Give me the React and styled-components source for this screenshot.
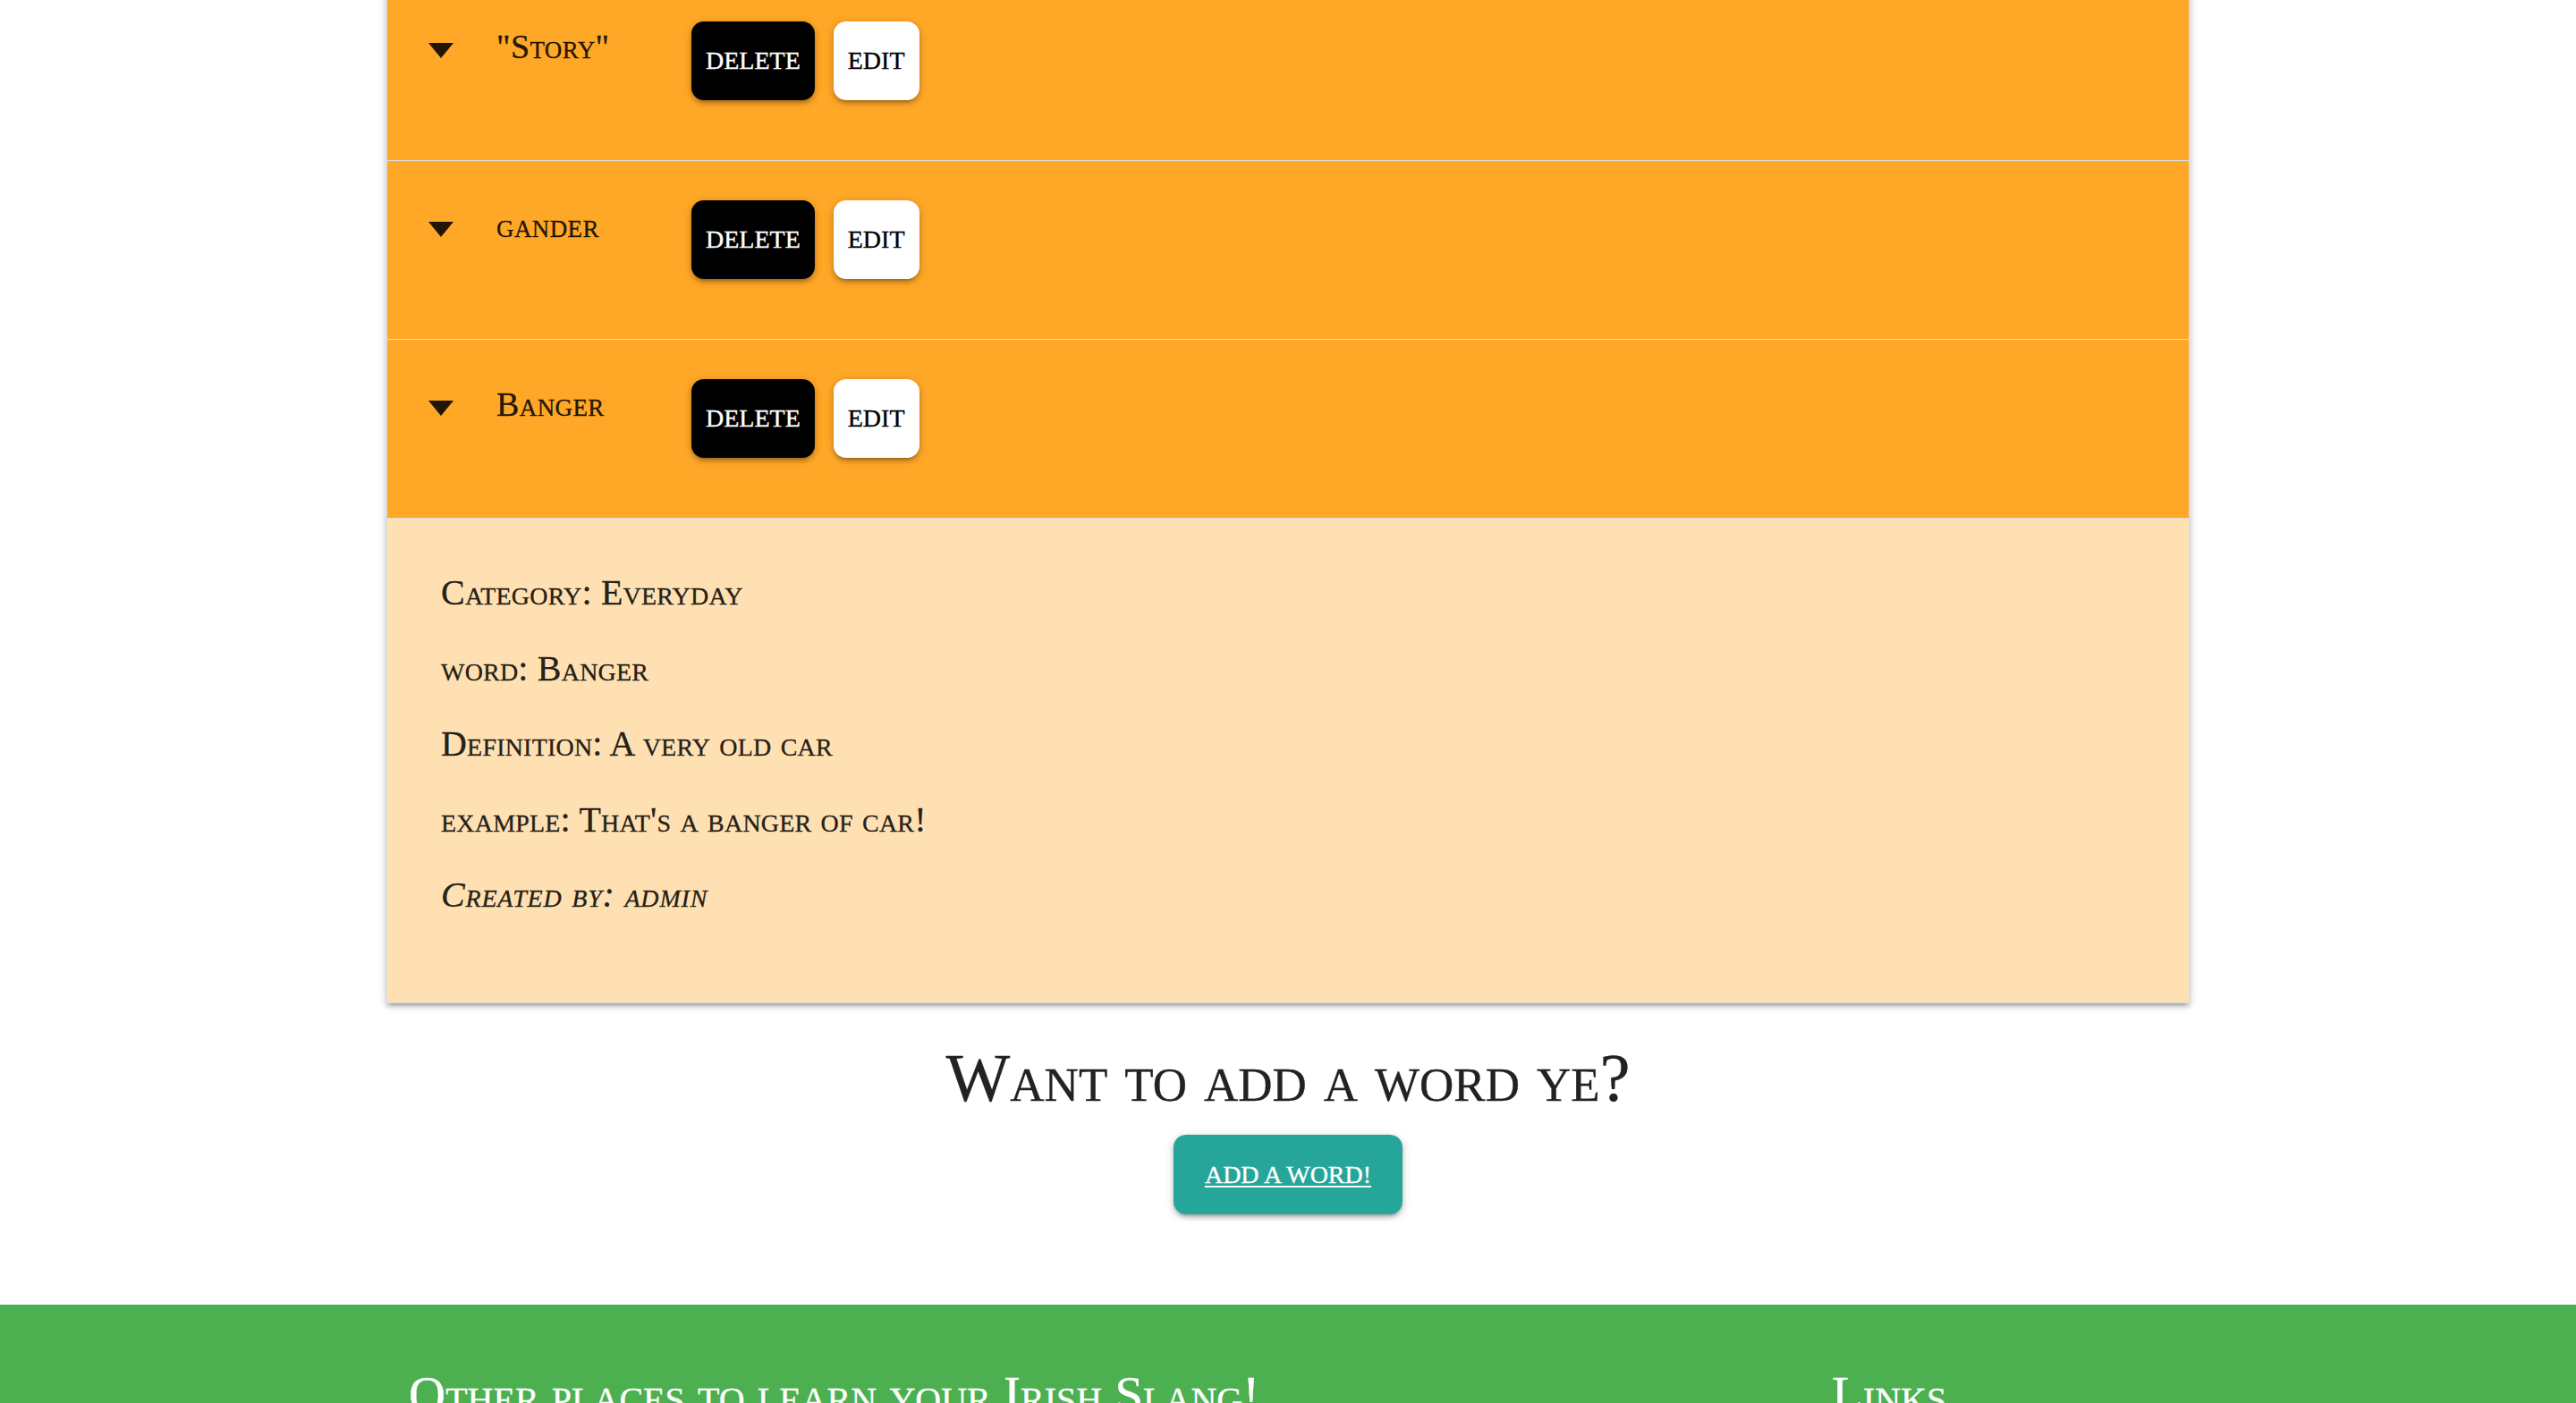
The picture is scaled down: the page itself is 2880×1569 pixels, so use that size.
import React from "react";
import styled, { createGlobalStyle } from "styled-components";

const GlobalStyle = createGlobalStyle`
  html, body {
    margin: 0;
    padding: 0;
    background: #ffffff;
  }
  body {
    font-family: "Liberation Serif", "Times New Roman", serif;
    color: rgba(0, 0, 0, 0.87);
    font-variant: small-caps;
    overflow: hidden;
    -webkit-text-stroke: 0.35px currentColor;
  }
`;

const Page = styled.div`
  display: flex;
  flex-direction: column;
`;

const Container = styled.main`
  width: 70%;
  margin: -21px auto 0;
`;

const Collapsible = styled.ul`
  list-style: none;
  margin: 0;
  padding: 0;
  border-top: 1px solid #dddddd;
  border-left: 1px solid #dddddd;
  border-right: 1px solid #dddddd;
  box-shadow: 0 4px 4px 0 rgba(0, 0, 0, 0.14), 0 6px 2px -4px rgba(0, 0, 0, 0.12),
    0 2px 10px 0 rgba(0, 0, 0, 0.2);
`;

const Item = styled.li``;

const Header = styled.div`
  display: flex;
  align-items: flex-start;
  box-sizing: border-box;
  height: 200px;
  padding: 44px 0 0 46px;
  background: #ffa726;
  border-bottom: 1px solid #dddddd;
`;

const Arrow = styled.svg`
  flex: none;
  width: 28px;
  height: 17px;
  margin-top: 24px;
  margin-right: 48px;
`;

const Word = styled.span`
  flex: none;
  width: 218px;
  margin-top: 9px;
  font-size: 38px;
  line-height: 1;
  letter-spacing: 0.4px;
`;

const Btn = styled.button`
  flex: none;
  height: 88px;
  padding: 0 16px;
  margin-right: 21px;
  border: none;
  border-radius: 14px;
  font-family: "Liberation Serif", "Times New Roman", serif;
  font-size: 28px;
  font-variant: normal;
  text-transform: uppercase;
  line-height: 88px;
  cursor: pointer;
  -webkit-text-stroke: 0.35px currentColor;
  background: ${(p) => (p.$variant === "danger" ? "#000000" : "#ffffff")};
  color: ${(p) => (p.$variant === "danger" ? "#ffffff" : "#000000")};
  box-shadow: 0 4px 4px 0 rgba(0, 0, 0, 0.14), 0 6px 2px -4px rgba(0, 0, 0, 0.12),
    0 2px 10px 0 rgba(0, 0, 0, 0.2);
`;

const Body = styled.div`
  display: flex;
  flex-direction: column;
  gap: 24.5px;
  padding: 53px 60px 90px;
  background: #ffe0b2;
  border-bottom: 1px solid #dddddd;
`;

const Detail = styled.p`
  margin: 0;
  font-size: 40px;
  line-height: 60px;
  letter-spacing: ${(p) => (p.$italic ? "0.8px" : "0.2px")};
  font-style: ${(p) => (p.$italic ? "italic" : "normal")};
`;

const Cta = styled.section`
  display: flex;
  flex-direction: column;
  align-items: center;
  padding: 38px 0 101px;
`;

const CtaTitle = styled.h4`
  margin: 0 0 18px;
  font-size: 76px;
  line-height: 1.2;
  font-weight: 400;
  color: #222222;
`;

const AddButton = styled.a`
  display: inline-block;
  height: 89px;
  padding: 0 35px;
  border-radius: 14px;
  background: #26a69a;
  color: #ffffff;
  font-size: 28px;
  font-variant: normal;
  text-transform: uppercase;
  line-height: 89px;
  text-decoration: underline;
  text-underline-offset: 3px;
  box-shadow: 0 4px 4px 0 rgba(0, 0, 0, 0.14), 0 6px 2px -4px rgba(0, 0, 0, 0.12),
    0 2px 10px 0 rgba(0, 0, 0, 0.2);
`;

const Footer = styled.footer`
  background: #4caf50;
  padding-top: 70px;
  min-height: 400px;
`;

const FooterInner = styled.div`
  width: 70%;
  margin: 0 auto;
  box-sizing: border-box;
  padding: 0 25px;
  display: grid;
  grid-template-columns: 1591px 1fr;
`;

const FooterHeading = styled.h5`
  margin: 0;
  font-size: 57px;
  line-height: 1.1;
  font-weight: 400;
  color: #ffffff;
`;

const words = [
  { word: '"Story"' },
  { word: "gander" },
  {
    word: "Banger",
    open: true,
    category: "Everyday",
    definition: "A very old car",
    example: "That's a banger of car!",
    author: "admin",
  },
];

function DropArrow() {
  return (
    <Arrow viewBox="0 0 28 17" aria-hidden="true">
      <path d="M0 0 L28 0 L14 17 Z" fill="rgba(0,0,0,0.87)" />
    </Arrow>
  );
}

export default function App() {
  return (
    <Page>
      <GlobalStyle />
      <Container>
        <Collapsible>
          {words.map((w) => (
            <Item key={w.word}>
              <Header>
                <DropArrow />
                <Word>{w.word}</Word>
                <Btn $variant="danger">Delete</Btn>
                <Btn>Edit</Btn>
              </Header>
              {w.open && (
                <Body>
                  <Detail>Category: {w.category}</Detail>
                  <Detail>word: {w.word}</Detail>
                  <Detail>Definition: {w.definition}</Detail>
                  <Detail>example: {w.example}</Detail>
                  <Detail $italic>Created by: {w.author}</Detail>
                </Body>
              )}
            </Item>
          ))}
        </Collapsible>
      </Container>
      <Cta>
        <CtaTitle>Want to add a word ye?</CtaTitle>
        <AddButton href="#">Add a word!</AddButton>
      </Cta>
      <Footer>
        <FooterInner>
          <FooterHeading>Other places to learn your Irish Slang!</FooterHeading>
          <FooterHeading>Links</FooterHeading>
        </FooterInner>
      </Footer>
    </Page>
  );
}
